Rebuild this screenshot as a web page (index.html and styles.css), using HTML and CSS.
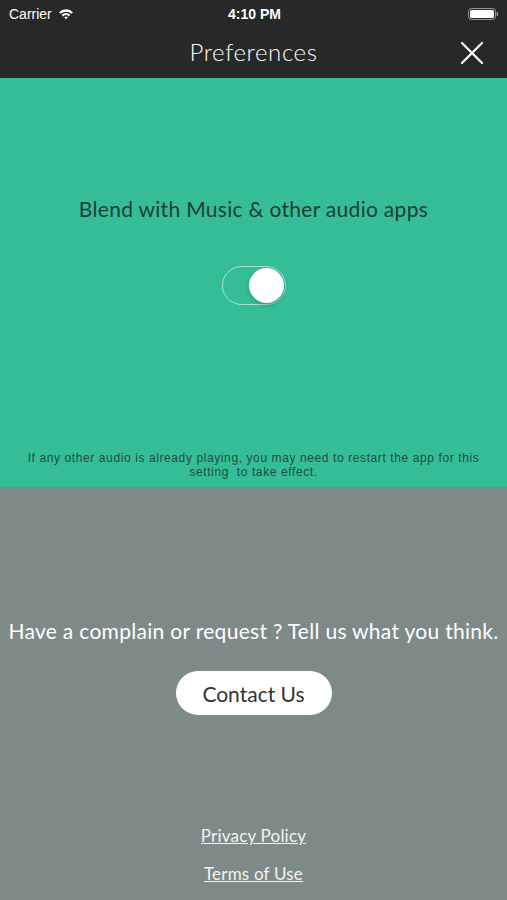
FILE: index.html
```html
<!DOCTYPE html>
<html lang="en">
<head>
  <meta charset="UTF-8">
  <meta name="viewport" content="width=device-width, initial-scale=1.0">
  <title>Preferences</title>
  <link rel="stylesheet" href="styles.css">
</head>
<body>
  <div class="top">
    <div class="status">
      <div class="carrier">
        Carrier
        <svg width="16" height="12" viewBox="0 0 16 12">
          <path d="M1 4.2 A10 10 0 0 1 15 4.2 L13.4 5.8 A7.8 7.8 0 0 0 2.6 5.8 Z" fill="#fff"/>
          <path d="M3.6 6.8 A6.3 6.3 0 0 1 12.4 6.8 L10.8 8.4 A4 4 0 0 0 5.2 8.4 Z" fill="#fff"/>
          <path d="M6.2 9.4 A2.5 2.5 0 0 1 9.8 9.4 L8 11.3 Z" fill="#fff"/>
        </svg>
      </div>
      <div class="clock">4:10 PM</div>
      <div class="battery">
        <svg width="32" height="14" viewBox="0 0 32 14">
          <rect x="0.5" y="1.5" width="27" height="11" rx="3" fill="none" stroke="#fff" stroke-opacity="0.5"/>
          <rect x="2" y="3" width="24" height="8" rx="1.6" fill="#fff"/>
          <rect x="28.5" y="5" width="1.6" height="4" rx="0.8" fill="#fff" fill-opacity="0.5"/>
        </svg>
      </div>
    </div>
    <div class="navbar">
      <h1>Preferences</h1>
      <svg class="close" width="24" height="24" viewBox="0 0 24 24">
        <path d="M2 2 L22 22 M22 2 L2 22" stroke="#fff" stroke-width="2.2" stroke-linecap="round"/>
      </svg>
    </div>
  </div>

  <div class="audio">
    <p class="blend">Blend with Music &amp; other audio apps</p>
    <div class="toggle"><div class="knob"></div></div>
    <p class="note">If any other audio is already playing, you may need to restart the app for this setting&nbsp; to take effect.</p>
  </div>

  <div class="feedback">
    <p class="ask">Have a complain or request ? Tell us what you think.</p>
    <button class="contact">Contact Us</button>
    <div class="links">
      <a href="#">Privacy Policy</a>
      <a href="#">Terms of Use</a>
    </div>
  </div>
</body>
</html>
```

FILE: styles.css
```css
body {
  margin: 0;
  width: 507px;
  height: 900px;
  display: flex;
  flex-direction: column;
  font-family: Lato, "Noto Sans", sans-serif;
  overflow: hidden;
}
.top {
  background: #282828;
  color: white;
}
.status {
  height: 28px;
  display: flex;
  align-items: center;
  justify-content: space-between;
  padding: 0 7px 0 9px;
  font-family: "Liberation Sans", Arial, sans-serif;
  font-size: 14px;
}
.carrier { display: flex; align-items: center; gap: 6px; width: 90px; }
.clock { font-weight: bold; }
.battery { width: 90px; display: flex; justify-content: flex-end; }
.navbar {
  height: 50px;
  display: flex;
  align-items: center;
  justify-content: center;
  position: relative;
}
.navbar h1 {
  margin: 0 0 4px;
  font-size: 24px;
  font-weight: 300;
  letter-spacing: 0.6px;
}
.close { position: absolute; right: 23px; top: 13px; }

.audio {
  height: 409px;
  background: #35bd98;
  display: flex;
  flex-direction: column;
  align-items: center;
}
.blend {
  margin: 118px 0 0;
  font-size: 21px;
  color: #1d3d35;
  letter-spacing: 0.3px;
}
.toggle {
  margin-top: 45px;
  width: 60px;
  height: 37px;
  border: 1.5px solid rgba(255,255,255,0.55);
  border-radius: 20px;
  display: flex;
  align-items: center;
  justify-content: flex-end;
  padding: 0 1px;
}
.knob {
  width: 35px;
  height: 35px;
  border-radius: 50%;
  background: white;
  box-shadow: 0 2px 4px rgba(0,0,0,0.2);
}
.note {
  margin: auto 20px 8px;
  text-align: center;
  font-family: "Liberation Sans", Arial, sans-serif;
  font-size: 12px;
  line-height: 14px;
  letter-spacing: 0.6px;
  color: #1f4d40;
}

.feedback {
  flex: 1;
  background: #7e8a88;
  display: flex;
  flex-direction: column;
  align-items: center;
  color: white;
}
.ask {
  margin: 131px 0 0;
  font-size: 21px;
  letter-spacing: 0.3px;
  white-space: nowrap;
}
.contact {
  margin-top: 28px;
  width: 156px;
  height: 44px;
  border: none;
  border-radius: 22px;
  background: white;
  color: #333;
  font-family: inherit;
  font-size: 21px;
}
.links {
  margin-top: 110px;
  display: flex;
  flex-direction: column;
  align-items: center;
  gap: 16px;
}
.links a {
  color: #f2f4f3;
  font-size: 17px;
  line-height: 22px;
  letter-spacing: 0.2px;
}
```
